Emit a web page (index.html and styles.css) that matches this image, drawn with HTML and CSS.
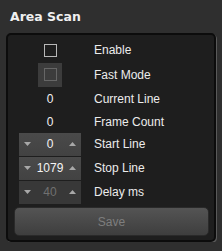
FILE: index.html
```html
<!DOCTYPE html>
<html lang="en">
<head>
  <meta charset="UTF-8">
  <title>Area Scan</title>
  <link rel="stylesheet" href="styles.css">
</head>
<body>
  <h2 class="title">Area Scan</h2>
  <div class="panel">
    <div class="grid">
      <div class="ctrl"><span class="check"></span></div>
      <div class="label">Enable</div>

      <div class="ctrl"><span class="check-wrap disabled"><span class="check"></span></span></div>
      <div class="label">Fast Mode</div>

      <div class="ctrl"><span class="value">0</span></div>
      <div class="label">Current Line</div>

      <div class="ctrl"><span class="value">0</span></div>
      <div class="label">Frame Count</div>

      <div class="ctrl">
        <div class="spin">
          <svg class="arrow" width="7" height="4" viewBox="0 0 7 4"><polygon points="0,0 7,0 3.5,4"/></svg>
          <span class="spin-val">0</span>
          <svg class="arrow" width="7" height="4" viewBox="0 0 7 4"><polygon points="0,4 7,4 3.5,0"/></svg>
        </div>
      </div>
      <div class="label">Start Line</div>

      <div class="ctrl">
        <div class="spin">
          <svg class="arrow" width="7" height="4" viewBox="0 0 7 4"><polygon points="0,0 7,0 3.5,4"/></svg>
          <span class="spin-val">1079</span>
          <svg class="arrow" width="7" height="4" viewBox="0 0 7 4"><polygon points="0,4 7,4 3.5,0"/></svg>
        </div>
      </div>
      <div class="label">Stop Line</div>

      <div class="ctrl">
        <div class="spin disabled">
          <svg class="arrow" width="7" height="4" viewBox="0 0 7 4"><polygon points="0,0 7,0 3.5,4"/></svg>
          <span class="spin-val">40</span>
          <svg class="arrow" width="7" height="4" viewBox="0 0 7 4"><polygon points="0,4 7,4 3.5,0"/></svg>
        </div>
      </div>
      <div class="label">Delay ms</div>
    </div>
    <button class="btn" disabled>Save</button>
  </div>
</body>
</html>
```

FILE: styles.css
```css
body {
  margin: 0;
  background: #2f2f2f;
  color: #e8e8e8;
  font-family: 'Liberation Sans', Arial, sans-serif;
  font-size: 11px;
}
.title {
  margin: 0;
  padding: 9px 0 0 10px;
  height: 24px;
  font-family: 'DejaVu Sans', sans-serif;
  font-size: 12.5px;
  font-weight: bold;
  color: #f0f0f0;
}
.panel {
  margin: 0 6px 0 6px;
  width: 206px;
  border: 2px solid #0c0c0c;
  border-radius: 5px;
  background: #1e1e1e;
  box-shadow: 1px 1px 0 #5a5a5a;
  padding: 3px 0 4px 0;
}
.grid {
  display: grid;
  grid-template-columns: 84px 1fr;
  grid-template-rows: 24px 25px 24px 21px 24px 24px 24px;
  column-gap: 2px;
}
.ctrl {
  display: flex;
  align-items: center;
  justify-content: center;
}
.label {
  display: flex;
  align-items: center;
  font-size: 12px;
  color: #ececec;
}
.check {
  display: block;
  width: 11px;
  height: 11px;
  border: 1px solid #b8b8b8;
}
.check-wrap {
  display: flex;
  align-items: center;
  justify-content: center;
  width: 24px;
  height: 24px;
  background: #3c3c3c;
}
.check-wrap.disabled .check {
  border-color: #666;
}
.value {
  font-size: 12px;
  color: #f2f2f2;
}
.spin {
  display: flex;
  align-items: center;
  justify-content: space-between;
  box-sizing: border-box;
  width: 62px;
  height: 23px;
  padding: 0 5px;
  background: linear-gradient(#4a4a4a, #424242);
}
.spin .arrow {
  fill: #a8a8a8;
}
.spin-val {
  font-size: 12px;
  color: #f4f4f4;
}
.spin.disabled {
  background: #383838;
}
.spin.disabled .spin-val {
  color: #707070;
}
.btn {
  display: block;
  margin: 3px 0 0 6px;
  width: 195px;
  height: 29px;
  border: 1px solid #2a2a2a;
  border-radius: 5px;
  background: linear-gradient(#545454, #3e3e3e);
  color: #7e7e7e;
  font-family: 'Liberation Sans', Arial, sans-serif;
  font-size: 12px;
}
```
